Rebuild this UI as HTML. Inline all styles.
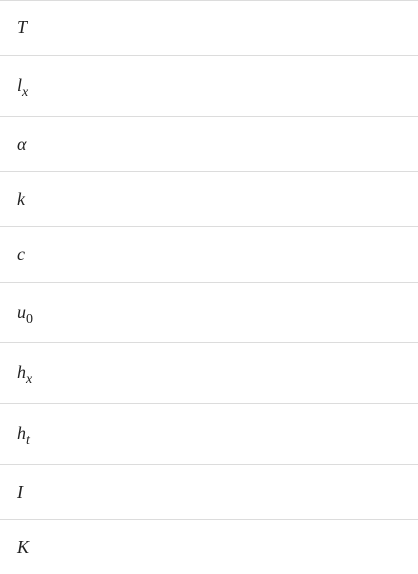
<html><head><style>
body{margin:0;width:418px;height:574px;background:#fff;position:relative;overflow:hidden;font-family:"Liberation Serif",serif;font-style:italic;font-size:18px;color:#222}
.l{position:absolute;left:0;width:418px;height:1px;background:#dcdcdc}
.t{position:absolute;left:17px;line-height:20px}
sub{font-size:14px;vertical-align:-5px}
</style></head><body>
<div class="l" style="top:0"></div>
<div class="t" style="top:17px">T</div>
<div class="l" style="top:55px"></div>
<div class="t" style="top:75px">l<sub>x</sub></div>
<div class="l" style="top:116px"></div>
<div class="t" style="top:134px">α</div>
<div class="l" style="top:171px"></div>
<div class="t" style="top:189px">k</div>
<div class="l" style="top:226px"></div>
<div class="t" style="top:244px">c</div>
<div class="l" style="top:282px"></div>
<div class="t" style="top:302px">u<sub style="font-style:normal">0</sub></div>
<div class="l" style="top:342px"></div>
<div class="t" style="top:362px">h<sub>x</sub></div>
<div class="l" style="top:403px"></div>
<div class="t" style="top:423px">h<sub>t</sub></div>
<div class="l" style="top:464px"></div>
<div class="t" style="top:482px">I</div>
<div class="l" style="top:519px"></div>
<div class="t" style="top:537px">K</div>
</body></html>
